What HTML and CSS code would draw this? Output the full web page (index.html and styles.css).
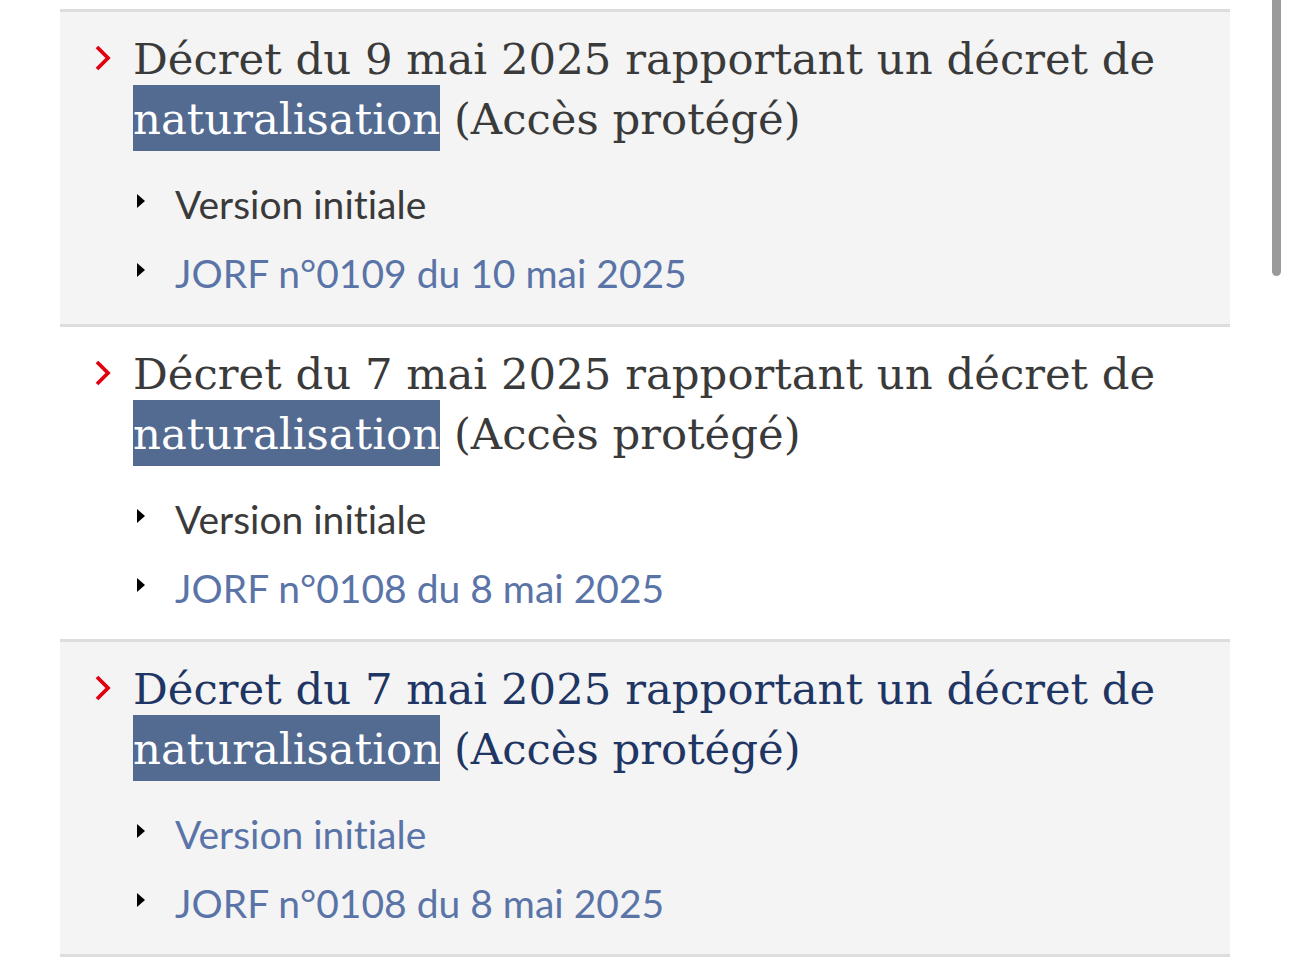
FILE: index.html
```html
<!DOCTYPE html>
<html lang="fr">
<head>
    <meta charset="UTF-8">
    <meta name="viewport" content="width=device-width, initial-scale=1.0">
    <title>Résultats</title>
    <link rel="stylesheet" href="styles.css">
</head>
<body>
    <ul class="results">
        <li class="result shaded">
            <h2 class="result-title">
                <svg class="chevron" width="18" height="28" viewBox="0 0 18 28"><polyline points="3,3 14,14 3,25" fill="none" stroke="#e1000f" stroke-width="3.8"/></svg>
                <a href="#">Décret du 9 mai 2025 rapportant un décret de <mark>naturalisation</mark> (Accès protégé)</a>
            </h2>
            <ul class="links">
                <li><span class="plain">Version initiale</span></li>
                <li><a href="#">JORF n°0109 du 10 mai 2025</a></li>
            </ul>
        </li>
        <li class="result">
            <h2 class="result-title">
                <svg class="chevron" width="18" height="28" viewBox="0 0 18 28"><polyline points="3,3 14,14 3,25" fill="none" stroke="#e1000f" stroke-width="3.8"/></svg>
                <a href="#">Décret du 7 mai 2025 rapportant un décret de <mark>naturalisation</mark> (Accès protégé)</a>
            </h2>
            <ul class="links">
                <li><span class="plain">Version initiale</span></li>
                <li><a href="#">JORF n°0108 du 8 mai 2025</a></li>
            </ul>
        </li>
        <li class="result shaded visited">
            <h2 class="result-title">
                <svg class="chevron" width="18" height="28" viewBox="0 0 18 28"><polyline points="3,3 14,14 3,25" fill="none" stroke="#e1000f" stroke-width="3.8"/></svg>
                <a href="#">Décret du 7 mai 2025 rapportant un décret de <mark>naturalisation</mark> (Accès protégé)</a>
            </h2>
            <ul class="links">
                <li><a href="#">Version initiale</a></li>
                <li><a href="#">JORF n°0108 du 8 mai 2025</a></li>
            </ul>
        </li>
    </ul>

    <div class="scrollbar"></div>
</body>
</html>
```

FILE: styles.css
```css
body {
    margin: 0;
    background-color: #fff;
    font-family: "Lato", sans-serif;
}

.results {
    list-style: none;
    margin: 9px 60px 0 60px;
    padding: 0;
    border-top: 3px solid #dddddd;
}

.result {
    border-bottom: 3px solid #dddddd;
    padding: 17px 40px 0 34px;
    height: 295px;
}

.shaded {
    background-color: #f4f4f4;
}

.result-title {
    display: flex;
    align-items: flex-start;
    gap: 21px;
    margin: 0;
    font-family: "DejaVu Serif", serif;
    font-weight: normal;
    font-size: 43.4px;
    line-height: 60px;
}

.chevron {
    flex-shrink: 0;
    margin-top: 15px;
}

.result-title a {
    color: #3a3a3a;
    text-decoration: none;
}

.visited .result-title a {
    color: #1f3563;
}

mark {
    padding: 9px 0 7px 0;
    background-color: #536a91;
    color: #fff;
}

.links {
    list-style: none;
    margin: 21px 0 0 0;
    padding: 0 0 0 43px;
    font-size: 39px;
    line-height: 69px;
    font-variant-ligatures: none;
}

.links li {
    display: flex;
    align-items: center;
    gap: 30px;
}

.links li::before {
    content: "";
    width: 0;
    height: 0;
    border-top: 7px solid transparent;
    border-bottom: 7px solid transparent;
    border-left: 8px solid #000;
    margin-top: -8px;
}

.plain {
    color: #3a3a3a;
}

.links a {
    color: #5a74a8;
    text-decoration: none;
}

.scrollbar {
    position: fixed;
    top: 0;
    right: 9px;
    width: 9px;
    height: 276px;
    border-radius: 0 0 5px 5px;
    background-color: #9a9a9a;
}
```
